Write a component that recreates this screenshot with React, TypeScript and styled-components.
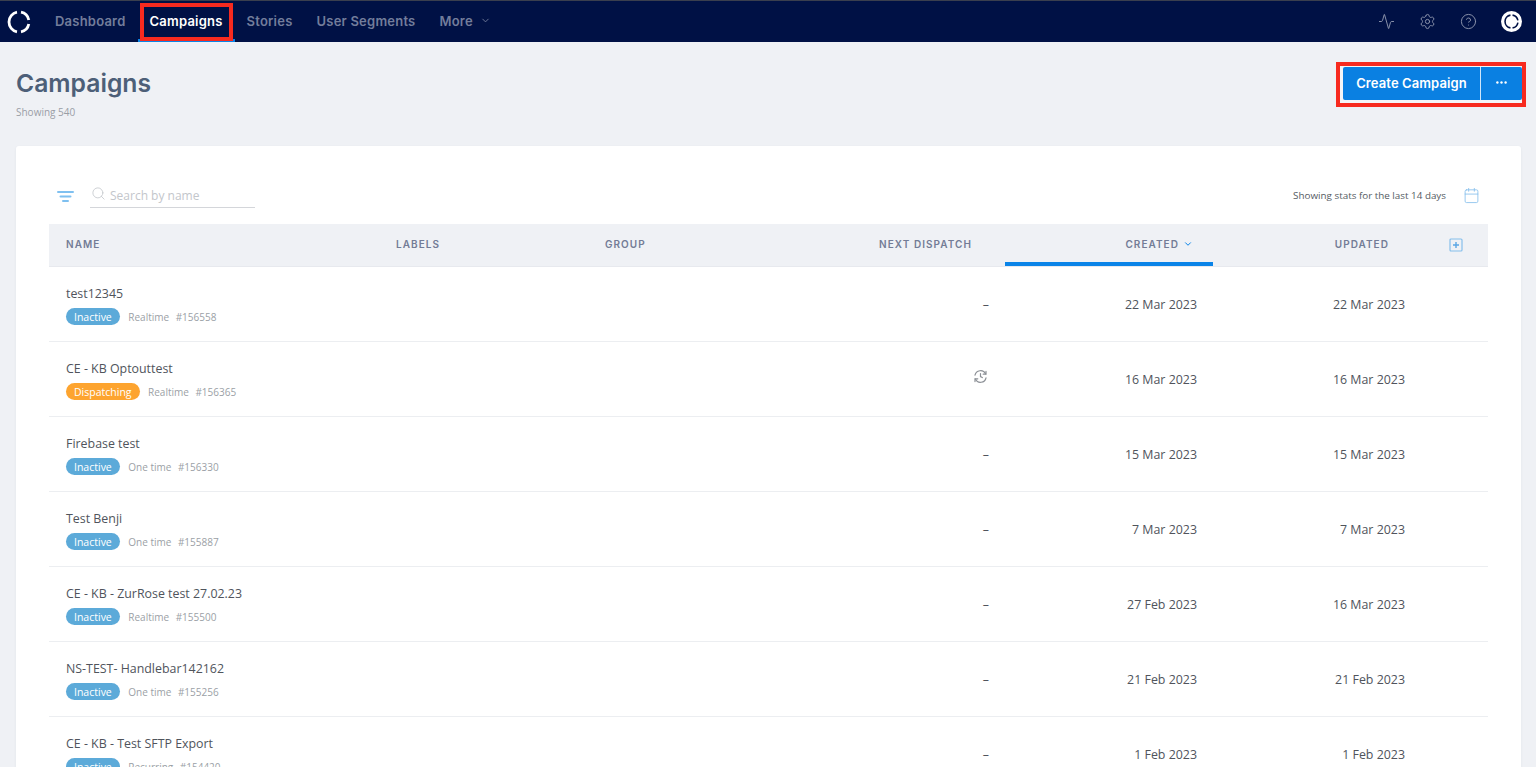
import { FC } from 'react';
import styled, { createGlobalStyle } from 'styled-components';
import { Activity, Calendar, ChevronDown, CircleHelp, Search, Settings } from 'lucide-react';

const GlobalStyle = createGlobalStyle`
  html, body {
    margin: 0;
    height: 100%;
    overflow: hidden;
    background: #eff1f5;
    font-family: 'Open Sans', sans-serif;
  }
`;

const NAV_FONT = `Inter, 'Open Sans', sans-serif`;

const TopBar = styled.header`
  display: flex;
  align-items: stretch;
  height: 41px;
  border-top: 1px solid #3a3f4e;
  background: #001145;
  padding: 0 14px 0 7px;
`;

const LogoSlot = styled.div`
  display: flex;
  align-items: center;
  width: 36px;
`;

const NavList = styled.nav`
  display: flex;
  align-items: stretch;
  flex: 1;
`;

const NavItem = styled.div<{ $active?: boolean }>`
  position: relative;
  display: flex;
  align-items: center;
  gap: 7px;
  padding: 1px 12px 0;
  font-family: ${NAV_FONT};
  font-size: 13px;
  font-weight: 600;
  letter-spacing: 0.22px;
  color: ${({ $active }) => ($active ? '#ffffff' : '#737d9b')};
  border-bottom: 3px solid ${({ $active }) => ($active ? '#0a84e8' : 'transparent')};
  height: 37px;
`;

const RedFrame = styled.span`
  position: absolute;
  left: 2px;
  right: 2px;
  top: 2px;
  bottom: -2px;
  border: 4px solid #f72a1f;
  pointer-events: none;
`;

const BarIcons = styled.div`
  display: flex;
  align-items: center;
  gap: 24px;
  color: #8a92aa;
`;

const PageHead = styled.div`
  display: flex;
  justify-content: space-between;
  padding: 20px 10px 0 16px;
  height: 104px;
  box-sizing: border-box;
`;

const Title = styled.h1`
  margin: 6px 0 0;
  font-family: ${NAV_FONT};
  font-size: 24.7px;
  line-height: 30px;
  font-weight: 600;
  color: #4d5f78;
`;

const Count = styled.div`
  margin-top: 7px;
  font-size: 10px;
  line-height: 14px;
  color: #9a9ea6;
`;

const ActionFrame = styled.div`
  display: flex;
  align-self: flex-start;
  border: 4px solid #f72a1f;
  padding: 1px 0 3px 3px;
  background: #f4f5f8;
`;

const PrimaryButton = styled.button<{ $narrow?: boolean }>`
  display: flex;
  align-items: center;
  justify-content: center;
  height: 33px;
  width: ${({ $narrow }) => ($narrow ? '42px' : '137px')};
  border: 0;
  border-left: ${({ $narrow }) => ($narrow ? '1px solid #cfe6fa' : '0')};
  border-radius: ${({ $narrow }) => ($narrow ? '0 2px 2px 0' : '2px 0 0 2px')};
  background: #0a80e2;
  color: #fff;
  font-family: ${NAV_FONT};
  font-size: 13px;
  font-weight: 600;
  letter-spacing: 0.1px;
  padding: 0 0 2px;
`;

const Panel = styled.main`
  margin: 0 15px 0 16px;
  padding: 0 33px;
  background: #fff;
  border-radius: 3px 3px 0 0;
  box-shadow: 0 1px 3px rgba(30, 50, 90, 0.06);
`;

const Toolbar = styled.div`
  display: flex;
  align-items: center;
  justify-content: space-between;
  height: 78px;
  padding: 22px 8px 0 8px;
  box-sizing: border-box;
`;

const ToolbarGroup = styled.div`
  display: flex;
  align-items: center;
  gap: 17px;
`;

const FilterGroup = styled(ToolbarGroup)`
  gap: 16px;
`;

const SearchField = styled.div`
  display: flex;
  align-items: center;
  gap: 4px;
  width: 165px;
  height: 23px;
  padding-left: 1px;
  box-sizing: border-box;
  border-bottom: 1px solid #d4d6da;
  font-size: 12px;
  color: #c3c6cb;

  svg {
    margin-top: -4px;
  }
`;

const StatsGroup = styled(ToolbarGroup)`
  margin-top: -2px;
`;

const StatsNote = styled.span`
  font-size: 9.85px;
  color: #555b63;
`;

const Row = styled.div<{ $head?: boolean }>`
  display: grid;
  grid-template-columns: 330px 209px 209px 208px 208px 208px 67px;
  height: ${({ $head }) => ($head ? '43px' : '75px')};
  box-sizing: border-box;
  background: ${({ $head }) => ($head ? '#eff1f5' : '#fff')};
  border-bottom: 1px solid ${({ $head }) => ($head ? '#e7e9ee' : '#eceef1')};
`;

const HeadCell = styled.div<{ $right?: boolean; $sorted?: boolean; $pad?: number }>`
  display: flex;
  align-items: center;
  justify-content: ${({ $right }) => ($right ? 'flex-end' : 'flex-start')};
  gap: 4px;
  padding: 0 ${({ $pad }) => $pad ?? 16}px 2px 17px;
  font-family: ${NAV_FONT};
  font-size: 10px;
  font-weight: 600;
  letter-spacing: 1.05px;
  color: #737c96;
  box-shadow: ${({ $sorted }) => ($sorted ? 'inset 0 -4px 0 #0a84e8' : 'none')};
`;

const AddCell = styled.div`
  display: flex;
  align-items: center;
  padding-left: 28px;
`;

const NameCell = styled.div`
  display: flex;
  flex-direction: column;
  justify-content: center;
  gap: 5px;
  padding: 2px 0 0 17px;
`;

const CampaignName = styled.div`
  font-size: 12.4px;
  line-height: 18px;
  color: #50545c;
`;

const MetaLine = styled.div`
  display: flex;
  align-items: center;
  gap: 6.5px;
  font-size: 10px;
  color: #9b9fa6;
`;

const Badge = styled.span<{ $tone: 'blue' | 'orange' }>`
  display: inline-flex;
  align-items: center;
  height: 17px;
  padding: 0 8px;
  border-radius: 9px;
  font-size: 10.5px;
  color: #fff;
  background: ${({ $tone }) => ($tone === 'blue' ? '#5caad9' : '#fda42f')};
  margin-right: 2px;
`;

const ValueCell = styled.div`
  display: flex;
  align-items: center;
  justify-content: flex-end;
  padding: 0 16px 0 0;
  font-size: 12.4px;
  color: #50545c;
`;

const DispatchIcon = styled.div`
  display: flex;
  justify-content: flex-end;
  padding: 27px 17px 0 0;
  color: #8c9096;
`;

const Logo: FC = () => (
  <svg width="24" height="24" viewBox="0 0 24 24" fill="none" stroke="#fff" strokeWidth="2.8">
    <path d="M10 2.2A10 10 0 0 0 10 21.8" />
    <path d="M14 2.2a10 10 0 0 1 7.8 7.8" />
    <path d="M21.8 14a10 10 0 0 1-7.8 7.8" />
  </svg>
);

const Avatar: FC = () => (
  <svg width="21" height="21" viewBox="0 0 24 24" fill="none" stroke="#001145" strokeWidth="1.8">
    <circle cx="12" cy="12" r="12" fill="#fff" stroke="none" />
    <path d="M10.8 4.7a7.4 7.4 0 0 0 0 14.6" />
    <path d="M13.2 4.7a7.4 7.4 0 0 1 6.1 6.1" />
    <path d="M19.3 13.2a7.4 7.4 0 0 1-6.1 6.1" />
  </svg>
);

const FilterIcon: FC = () => (
  <svg width="17" height="13" viewBox="0 0 17 13" stroke="#7fc0f0" strokeWidth="2" strokeLinecap="round">
    <path d="M1 2h15M3.5 6.5h10M6 11h5" />
  </svg>
);

const AddColumnIcon: FC = () => (
  <svg width="14" height="14" viewBox="0 0 14 14" fill="none">
    <rect x="1" y="1" width="12" height="12" rx="1" stroke="#86bfec" strokeWidth="1.2" />
    <path d="M7 4v6M4 7h6" stroke="#5ba6e4" strokeWidth="1.4" />
  </svg>
);

const MoreDots: FC = () => (
  <svg width="11" height="3" viewBox="0 0 11 3" fill="#fff">
    <circle cx="1.4" cy="1.5" r="1.2" />
    <circle cx="5.5" cy="1.5" r="1.2" />
    <circle cx="9.6" cy="1.5" r="1.2" />
  </svg>
);

const RefreshClock: FC = () => (
  <svg width="15" height="15" viewBox="0 0 15 15" fill="none" stroke="currentColor" strokeWidth="1.2" strokeLinecap="round">
    <path d="M2 6.2A5.6 5.6 0 0 1 12.6 5" />
    <path d="M13 8.8A5.6 5.6 0 0 1 2.4 10" />
    <path d="M13 2.4V5.2h-2.8M2 12.6V9.8h2.8" />
    <path d="M7.5 4.6v3l1.8 1" />
  </svg>
);

interface Campaign {
  name: string;
  status: string;
  kind: string;
  id: string;
  created: string;
  updated: string;
}

const campaigns: Campaign[] = [
  { name: 'test12345', status: 'Inactive', kind: 'Realtime', id: '#156558', created: '22 Mar 2023', updated: '22 Mar 2023' },
  { name: 'CE - KB Optouttest', status: 'Dispatching', kind: 'Realtime', id: '#156365', created: '16 Mar 2023', updated: '16 Mar 2023' },
  { name: 'Firebase test', status: 'Inactive', kind: 'One time', id: '#156330', created: '15 Mar 2023', updated: '15 Mar 2023' },
  { name: 'Test Benji', status: 'Inactive', kind: 'One time', id: '#155887', created: '7 Mar 2023', updated: '7 Mar 2023' },
  { name: 'CE - KB - ZurRose test 27.02.23', status: 'Inactive', kind: 'Realtime', id: '#155500', created: '27 Feb 2023', updated: '16 Mar 2023' },
  { name: 'NS-TEST- Handlebar142162', status: 'Inactive', kind: 'One time', id: '#155256', created: '21 Feb 2023', updated: '21 Feb 2023' },
  { name: 'CE - KB - Test SFTP Export', status: 'Inactive', kind: 'Recurring', id: '#154420', created: '1 Feb 2023', updated: '1 Feb 2023' },
];

export default function App() {
  return (
    <>
      <GlobalStyle />
      <TopBar>
        <LogoSlot>
          <Logo />
        </LogoSlot>
        <NavList>
          <NavItem>Dashboard</NavItem>
          <NavItem $active>
            Campaigns
            <RedFrame />
          </NavItem>
          <NavItem>Stories</NavItem>
          <NavItem>User Segments</NavItem>
          <NavItem>
            More <ChevronDown size={11} strokeWidth={2} />
          </NavItem>
        </NavList>
        <BarIcons>
          <Activity size={17} strokeWidth={1.4} />
          <Settings size={17} strokeWidth={1.4} />
          <CircleHelp size={17} strokeWidth={1.4} />
          <Avatar />
        </BarIcons>
      </TopBar>

      <PageHead>
        <div>
          <Title>Campaigns</Title>
          <Count>Showing 540</Count>
        </div>
        <ActionFrame>
          <PrimaryButton>Create Campaign</PrimaryButton>
          <PrimaryButton $narrow>
            <MoreDots />
          </PrimaryButton>
        </ActionFrame>
      </PageHead>

      <Panel>
        <Toolbar>
          <FilterGroup>
            <FilterIcon />
            <SearchField>
              <Search size={15} strokeWidth={1.3} />
              Search by name
            </SearchField>
          </FilterGroup>
          <StatsGroup>
            <StatsNote>Showing stats for the last 14 days</StatsNote>
            <Calendar size={17} strokeWidth={1.2} color="#86bfec" />
          </StatsGroup>
        </Toolbar>

        <Row $head>
          <HeadCell>NAME</HeadCell>
          <HeadCell>LABELS</HeadCell>
          <HeadCell>GROUP</HeadCell>
          <HeadCell $right $pad={33}>NEXT DISPATCH</HeadCell>
          <HeadCell $right $sorted $pad={20}>
            CREATED <ChevronDown size={10} strokeWidth={2.4} color="#0a84e8" />
          </HeadCell>
          <HeadCell $right $pad={32}>UPDATED</HeadCell>
          <AddCell>
            <AddColumnIcon />
          </AddCell>
        </Row>

        {campaigns.map((c) => (
          <Row key={c.id}>
            <NameCell>
              <CampaignName>{c.name}</CampaignName>
              <MetaLine>
                <Badge $tone={c.status === 'Dispatching' ? 'orange' : 'blue'}>{c.status}</Badge>
                <span>{c.kind}</span>
                <span>{c.id}</span>
              </MetaLine>
            </NameCell>
            <div />
            <div />
            {c.status === 'Dispatching' ? (
              <DispatchIcon>
                <RefreshClock />
              </DispatchIcon>
            ) : (
              <ValueCell>–</ValueCell>
            )}
            <ValueCell>{c.created}</ValueCell>
            <ValueCell>{c.updated}</ValueCell>
            <div />
          </Row>
        ))}
      </Panel>
    </>
  );
}
